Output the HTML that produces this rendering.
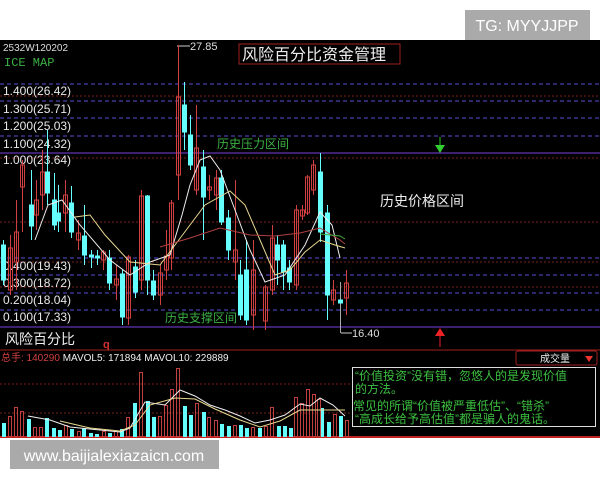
<!DOCTYPE html>
<html><head><meta charset="utf-8"><style>
html,body{margin:0;padding:0;background:#fff;width:600px;height:480px;overflow:hidden}
svg{display:block}
text{font-family:"Liberation Sans","Noto Sans CJK SC",sans-serif}
</style></head><body>
<svg width="600" height="480" xmlns="http://www.w3.org/2000/svg">
<rect x="0" y="0" width="600" height="480" fill="#fff"/>
<rect x="0" y="40" width="600" height="398" fill="#000"/>
<rect x="465" y="10" width="125" height="30" fill="#aaa"/>
<text x="527" y="31" fill="#fff" font-size="16" text-anchor="middle">TG: MYYJJPP</text>
<g stroke-width="1">
<g stroke="#5a4fd8" stroke-dasharray="4,3">
<line x1="0" y1="84" x2="600" y2="84"/><line x1="0" y1="101" x2="600" y2="101"/><line x1="0" y1="118" x2="600" y2="118"/><line x1="0" y1="136" x2="600" y2="136"/>
<line x1="0" y1="258" x2="600" y2="258"/><line x1="0" y1="275" x2="600" y2="275"/><line x1="0" y1="293" x2="600" y2="293"/><line x1="0" y1="310" x2="600" y2="310"/>
</g>
<g stroke="#7a2020" stroke-dasharray="2,2">
<line x1="0" y1="96" x2="600" y2="96"/><line x1="0" y1="158" x2="600" y2="158"/><line x1="0" y1="222" x2="600" y2="222"/><line x1="0" y1="262" x2="600" y2="262"/><line x1="0" y1="287" x2="600" y2="287"/><line x1="0" y1="384" x2="352" y2="384"/><line x1="0" y1="413" x2="352" y2="413"/>
</g>
<line x1="0" y1="153" x2="600" y2="153" stroke="#7b3fe0"/>
<line x1="0" y1="327" x2="600" y2="327" stroke="#7b3fe0"/>
<line x1="0" y1="350" x2="600" y2="350" stroke="#a02020"/>
<line x1="0" y1="437" x2="600" y2="437" stroke="#c02020" stroke-width="2"/>
</g>
<g fill="#e8e8e8" font-size="12">
<text x="3" y="51" font-size="10" fill="#ddd">2532W120202</text>
<text x="3" y="95">1.400(26.42)</text><text x="3" y="113">1.300(25.71)</text><text x="3" y="130">1.200(25.03)</text><text x="3" y="148">1.100(24.32)</text><text x="3" y="164">1.000(23.64)</text>
<text x="3" y="270">0.400(19.43)</text><text x="3" y="287">0.300(18.72)</text><text x="3" y="304">0.200(18.04)</text><text x="3" y="321">0.100(17.33)</text>
</g>
<text x="4" y="66" fill="#3cb043" font-size="12" style="font-family:'Liberation Mono',monospace">ICE MAP</text>
<rect x="239" y="44" width="161" height="20" fill="none" stroke="#a02020"/>
<text x="242" y="60" fill="#eee" font-size="16">风险百分比资金管理</text>
<text x="217" y="148" fill="#3cb043" font-size="12">历史压力区间</text>
<text x="165" y="322" fill="#3cb043" font-size="12">历史支撑区间</text>
<text x="380" y="206" fill="#eee" font-size="14">历史价格区间</text>
<text x="5" y="344" fill="#eee" font-size="14">风险百分比</text>
<text x="103" y="348" fill="#d03030" font-size="11" font-weight="bold">q</text>
<line x1="177" y1="46" x2="190" y2="46" stroke="#ccc"/><text x="190" y="50" fill="#ddd" font-size="11">27.85</text>
<line x1="341" y1="333" x2="352" y2="333" stroke="#ccc"/><text x="352" y="337" fill="#ddd" font-size="11">16.40</text>
<line x1="440" y1="137" x2="440" y2="148" stroke="#2c2"/><polygon points="435,145 445,145 440,153" fill="#3c3"/>
<line x1="440" y1="334" x2="440" y2="347" stroke="#e22"/><polygon points="435,336 445,336 440,328" fill="#e22"/>
<g stroke-width="1">
<g stroke="#d04040" fill="none">
<line x1="10.5" y1="235" x2="10.5" y2="295"/><rect x="8.5" y="248" width="4" height="42"/>
<line x1="16.5" y1="200" x2="16.5" y2="290"/><rect x="14.5" y="232" width="4" height="30"/>
<line x1="22.5" y1="160" x2="22.5" y2="232"/><rect x="20.5" y="165" width="4" height="22"/>
<line x1="36.5" y1="180" x2="36.5" y2="230"/><rect x="34.5" y="200" width="4" height="15"/>
<line x1="42.5" y1="150" x2="42.5" y2="210"/><rect x="40.5" y="172" width="4" height="23"/>
<line x1="65.5" y1="180" x2="65.5" y2="232"/><rect x="63.5" y="195" width="4" height="18"/>
<line x1="78.5" y1="220" x2="78.5" y2="250"/><rect x="76.5" y="233" width="4" height="7"/>
<line x1="103.5" y1="250" x2="103.5" y2="270"/><rect x="101.5" y="252" width="4" height="8"/>
<line x1="116.5" y1="265" x2="116.5" y2="300"/><rect x="114.5" y="279" width="4" height="6"/>
<line x1="128.5" y1="255" x2="128.5" y2="325"/><rect x="126.5" y="257" width="4" height="61"/>
<line x1="141.5" y1="190" x2="141.5" y2="290"/><rect x="139.5" y="196" width="4" height="84"/>
<line x1="160.5" y1="265" x2="160.5" y2="305"/><rect x="158.5" y="273" width="4" height="22"/>
<line x1="166.5" y1="230" x2="166.5" y2="280"/><rect x="164.5" y="256" width="4" height="14"/>
<line x1="171.5" y1="200" x2="171.5" y2="270"/><rect x="169.5" y="203" width="4" height="55"/>
<line x1="178.5" y1="45" x2="178.5" y2="200"/><rect x="176.5" y="97" width="4" height="78"/>
<line x1="196.5" y1="105" x2="196.5" y2="195"/><rect x="194.5" y="148" width="4" height="42"/>
<line x1="209.5" y1="175" x2="209.5" y2="200"/><rect x="207.5" y="187" width="4" height="3"/>
<line x1="216.5" y1="170" x2="216.5" y2="210"/><rect x="214.5" y="178" width="4" height="17"/>
<line x1="235.5" y1="180" x2="235.5" y2="280"/><rect x="233.5" y="250" width="4" height="12"/>
<line x1="253.5" y1="240" x2="253.5" y2="330"/><rect x="251.5" y="270" width="4" height="45"/>
<line x1="265.5" y1="285" x2="265.5" y2="330"/><rect x="263.5" y="287" width="4" height="34"/>
<line x1="272.5" y1="225" x2="272.5" y2="295"/><rect x="270.5" y="238" width="4" height="52"/>
<line x1="296.5" y1="205" x2="296.5" y2="290"/><rect x="294.5" y="210" width="4" height="75"/>
<line x1="302.5" y1="205" x2="302.5" y2="220"/><rect x="300.5" y="210" width="4" height="6"/>
<line x1="307.5" y1="175" x2="307.5" y2="215"/><rect x="305.5" y="177" width="4" height="36"/>
<line x1="313.5" y1="160" x2="313.5" y2="195"/><rect x="311.5" y="165" width="4" height="25"/>
<line x1="333.5" y1="280" x2="333.5" y2="305"/><rect x="331.5" y="290" width="4" height="10"/>
<line x1="346.5" y1="270" x2="346.5" y2="315"/><rect x="344.5" y="283" width="4" height="15"/>
</g>
<g stroke="#6ff" fill="#6ff">
<line x1="3.5" y1="240" x2="3.5" y2="285"/><rect x="1.5" y="245" width="4" height="35"/>
<line x1="31.5" y1="170" x2="31.5" y2="240"/><rect x="29.5" y="205" width="4" height="21"/>
<line x1="47.5" y1="130" x2="47.5" y2="205"/><rect x="45.5" y="172" width="4" height="21"/>
<line x1="54.5" y1="173" x2="54.5" y2="230"/><rect x="52.5" y="200" width="4" height="25"/>
<line x1="58.5" y1="185" x2="58.5" y2="232"/><rect x="56.5" y="213" width="4" height="8"/>
<line x1="71.5" y1="186" x2="71.5" y2="238"/><rect x="69.5" y="203" width="4" height="29"/>
<line x1="84.5" y1="205" x2="84.5" y2="265"/><rect x="82.5" y="236" width="4" height="19"/>
<line x1="91.5" y1="250" x2="91.5" y2="268"/><rect x="89.5" y="255" width="4" height="2"/>
<line x1="97.5" y1="250" x2="97.5" y2="265"/><rect x="95.5" y="256" width="4" height="2"/>
<line x1="109.5" y1="250" x2="109.5" y2="290"/><rect x="107.5" y="258" width="4" height="25"/>
<line x1="122.5" y1="270" x2="122.5" y2="325"/><rect x="120.5" y="274" width="4" height="43"/>
<line x1="135.5" y1="260" x2="135.5" y2="298"/><rect x="133.5" y="267" width="4" height="25"/>
<line x1="147.5" y1="195" x2="147.5" y2="295"/><rect x="145.5" y="196" width="4" height="84"/>
<line x1="153.5" y1="270" x2="153.5" y2="300"/><rect x="151.5" y="281" width="4" height="14"/>
<line x1="184.5" y1="82" x2="184.5" y2="150"/><rect x="182.5" y="105" width="4" height="27"/>
<line x1="190.5" y1="115" x2="190.5" y2="170"/><rect x="188.5" y="135" width="4" height="30"/>
<line x1="203.5" y1="150" x2="203.5" y2="240"/><rect x="201.5" y="167" width="4" height="30"/>
<line x1="221.5" y1="170" x2="221.5" y2="225"/><rect x="219.5" y="178" width="4" height="44"/>
<line x1="228.5" y1="210" x2="228.5" y2="260"/><rect x="226.5" y="218" width="4" height="32"/>
<line x1="240.5" y1="260" x2="240.5" y2="320"/><rect x="238.5" y="275" width="4" height="40"/>
<line x1="246.5" y1="240" x2="246.5" y2="325"/><rect x="244.5" y="270" width="4" height="50"/>
<line x1="277.5" y1="235" x2="277.5" y2="285"/><rect x="275.5" y="245" width="4" height="15"/>
<line x1="283.5" y1="240" x2="283.5" y2="290"/><rect x="281.5" y="245" width="4" height="27"/>
<line x1="289.5" y1="260" x2="289.5" y2="290"/><rect x="287.5" y="268" width="4" height="14"/>
<line x1="320.5" y1="153" x2="320.5" y2="242"/><rect x="318.5" y="172" width="4" height="60"/>
<line x1="327.5" y1="205" x2="327.5" y2="320"/><rect x="325.5" y="213" width="4" height="82"/>
<line x1="340.5" y1="282" x2="340.5" y2="333" stroke="#aaa"/><rect x="338.5" y="300" width="4" height="3"/>
</g>
</g>
<polyline fill="none" stroke="#eee" points="35,240 48,205 62,200 80,225 110,260 130,275 150,262 170,255 182,215 190,185 200,160 210,156 220,170 235,210 250,250 265,282 285,275 305,245 320,212 332,225 340,258"/>
<polyline fill="none" stroke="#e8d890" points="75,217 90,215 105,235 130,262 160,265 175,245 190,225 205,205 230,191 245,205 260,240 275,275 290,270 305,252 320,240 335,245 345,248"/>
<polyline fill="none" stroke="#b04040" points="160,247 190,238 220,228 250,235 275,236 300,233 320,228 340,240 345,244"/>
<polyline fill="none" stroke="#4a4" points="320,234 340,236 345,239"/>
<text x="1" y="361" font-size="10"><tspan fill="#d04040">总手: 140290 </tspan><tspan fill="#eee">MAVOL5: 171894  MAVOL10: 229889</tspan></text>
<rect x="516" y="351" width="81" height="14" rx="2" fill="none" stroke="#a02020"/>
<text x="540" y="362" fill="#eee" font-size="10">成交量</text>
<polygon points="585,356 593,356 589,362" fill="#e33"/>
<g fill="#6ff">
<rect x="2" y="423" width="4" height="14"/><rect x="27" y="419" width="4" height="18"/><rect x="45" y="418" width="4" height="19"/><rect x="52" y="428" width="4" height="9"/><rect x="58" y="430" width="4" height="7"/><rect x="70" y="429" width="4" height="8"/><rect x="82" y="428" width="4" height="9"/><rect x="89" y="433" width="4" height="4"/><rect x="95" y="434" width="4" height="3"/><rect x="108" y="433" width="4" height="4"/><rect x="120" y="429" width="4" height="8"/><rect x="133" y="403" width="4" height="34"/><rect x="146" y="401" width="4" height="36"/><rect x="152" y="417" width="4" height="20"/><rect x="183" y="406" width="4" height="31"/><rect x="189" y="415" width="4" height="22"/><rect x="202" y="412" width="4" height="25"/><rect x="220" y="424" width="4" height="13"/><rect x="227" y="426" width="4" height="11"/><rect x="239" y="425" width="4" height="12"/><rect x="245" y="428" width="4" height="9"/><rect x="258" y="428" width="4" height="9"/><rect x="277" y="426" width="4" height="11"/><rect x="283" y="426" width="4" height="11"/><rect x="289" y="428" width="4" height="9"/><rect x="320" y="408" width="4" height="29"/><rect x="327" y="422" width="4" height="15"/><rect x="339" y="416" width="4" height="21"/>
</g>
<g fill="none" stroke="#c04040">
<rect x="8.5" y="416.5" width="3" height="20"/><rect x="14.5" y="407.5" width="3" height="29"/><rect x="20.5" y="411.5" width="3" height="25"/><rect x="33.5" y="427.5" width="3" height="9"/><rect x="39.5" y="427.5" width="3" height="9"/><rect x="64.5" y="425.5" width="3" height="11"/><rect x="77.5" y="431.5" width="3" height="5"/><rect x="102.5" y="431.5" width="3" height="5"/><rect x="114.5" y="431.5" width="3" height="5"/><rect x="126.5" y="417.5" width="3" height="19"/><rect x="139.5" y="372.5" width="3" height="64"/><rect x="158.5" y="416.5" width="3" height="20"/><rect x="164.5" y="405.5" width="3" height="31"/><rect x="170.5" y="389.5" width="3" height="47"/><rect x="176.5" y="368.5" width="3" height="68"/><rect x="195.5" y="403.5" width="3" height="33"/><rect x="207.5" y="417.5" width="3" height="19"/><rect x="214.5" y="420.5" width="3" height="16"/><rect x="233.5" y="425.5" width="3" height="11"/><rect x="251.5" y="427.5" width="3" height="9"/><rect x="264.5" y="426.5" width="3" height="10"/><rect x="270.5" y="407.5" width="3" height="29"/><rect x="294.5" y="397.5" width="3" height="39"/><rect x="300.5" y="403.5" width="3" height="33"/><rect x="306.5" y="389.5" width="3" height="47"/><rect x="312.5" y="394.5" width="3" height="42"/><rect x="317.5" y="399.5" width="3" height="37"/><rect x="333.5" y="414.5" width="3" height="22"/><rect x="345.5" y="420.5" width="3" height="16"/>
</g>
<polyline fill="none" stroke="#eee" points="28,416 50,420 70,427 100,430 120,432 130,428 145,402 165,405 180,390 195,396 210,405 225,410 240,416 255,423 270,420 285,415 300,404 310,406 320,398 333,405 345,416"/>
<polyline fill="none" stroke="#e8d890" points="60,421 90,428 120,431 135,425 150,405 175,398 195,399 215,409 240,420 260,427 280,421 300,410 320,410 345,410"/>
<rect x="352.5" y="367.5" width="243" height="59" fill="#000" stroke="#ddd"/>
<g fill="#3cc040" font-size="12">
<text x="355" y="380">“价值投资”没有错，忽悠人的是发现价值</text>
<text x="355" y="393">的方法。</text>
<text x="353" y="410">常见的所谓“价值被严重低估”、“错杀”</text>
<text x="355" y="423">“高成长给予高估值”都是骗人的鬼话。</text>
</g>
<rect x="10" y="440" width="209" height="29" fill="#aaa"/>
<text x="114" y="461" fill="#fff" font-size="16" text-anchor="middle">www.baijialexiazaicn.com</text>
</svg>
</body></html>
